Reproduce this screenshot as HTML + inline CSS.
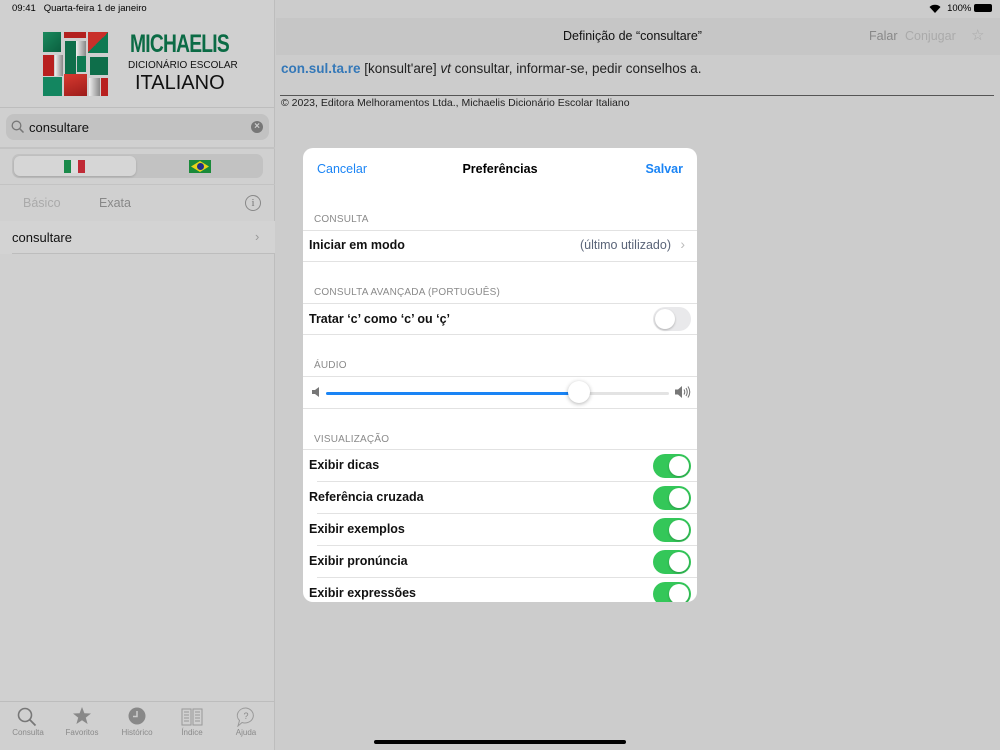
<!DOCTYPE html>
<html><head><meta charset="utf-8"><style>
*{box-sizing:border-box;margin:0;padding:0}
body{width:1000px;height:750px;overflow:hidden;background:#cccccc;font-family:"Liberation Sans",sans-serif;position:relative;color:#000}
.a{position:absolute}
.side{left:0;top:0;width:275px;height:750px;background:#d0d0d0;border-right:1px solid #bdbdbd}
.t{position:absolute}
.sec{position:absolute;left:11px;font-size:10px;color:#8a8a8a;letter-spacing:.2px}
.row{position:absolute;left:6px;font-size:12.5px;font-weight:bold;color:#111}
.line{position:absolute;height:1px;background:#e2e2e2}
.sw{position:absolute;right:6px;width:38px;height:24px;border-radius:12px;background:#34c759}
.sw::after{content:"";position:absolute;right:2px;top:2px;width:20px;height:20px;border-radius:50%;background:#fff;box-shadow:0 1px 2px rgba(0,0,0,.25)}
.sw.off{background:#e9e9eb}
.sw.off::after{left:2px;right:auto}
.tab{position:absolute;top:728px;width:50px;text-align:center;font-size:8px;color:#8a8a8a}
</style></head><body>
<div class="a side"></div>
<div class="t" style="left:12px;top:3px;font-size:9.5px">09:41&nbsp;&nbsp; Quarta-feira 1 de janeiro</div>
<div class="t" style="right:8px;top:3px;font-size:9.5px">100% <span style="display:inline-block;width:18px;height:8px;background:#000;border-radius:2px;vertical-align:-1px"></span></div>
<svg class="a" style="left:929px;top:4px" width="12" height="9" viewBox="0 0 12 9"><path d="M6 9 L0.5 3 A8 8 0 0 1 11.5 3 Z" fill="#000"/></svg>
<!-- logo -->
<div class="a" style="left:42px;top:31px;width:67px;height:66px;background:#cfcfcf">
<div class="a" style="left:1px;top:1px;width:18px;height:20px;background:linear-gradient(135deg,#1a8a5e,#0b5f3f)"></div>
<div class="a" style="left:22px;top:1px;width:22px;height:6px;background:#b3211f"></div>
<div class="a" style="left:46px;top:1px;width:20px;height:21px;background:linear-gradient(135deg,#c9302a 50%,#0e7a52 50%)"></div>
<div class="a" style="left:1px;top:24px;width:11px;height:21px;background:#b8201f"></div>
<div class="a" style="left:13px;top:24px;width:8px;height:21px;background:linear-gradient(90deg,#eee,#888)"></div>
<div class="a" style="left:23px;top:10px;width:11px;height:33px;background:#0e6e4a"></div>
<div class="a" style="left:34px;top:10px;width:10px;height:16px;background:linear-gradient(90deg,#eee,#888)"></div>
<div class="a" style="left:35px;top:25px;width:9px;height:16px;background:#0e7a52"></div>
<div class="a" style="left:48px;top:26px;width:18px;height:18px;background:#0e6e4a"></div>
<div class="a" style="left:1px;top:46px;width:19px;height:19px;background:#138660"></div>
<div class="a" style="left:22px;top:43px;width:23px;height:22px;background:linear-gradient(160deg,#d83a30,#9c1c1a)"></div>
<div class="a" style="left:47px;top:47px;width:11px;height:18px;background:linear-gradient(90deg,#eee,#888)"></div>
<div class="a" style="left:59px;top:47px;width:7px;height:18px;background:#b8201f"></div>
</div>
<div class="t" style="left:130px;top:30px;font-size:25px;font-weight:bold;color:#0b6b45;letter-spacing:-1px;transform:scaleX(.77);transform-origin:left">MICHAELIS</div>
<div class="t" style="left:128px;top:59px;font-size:10.5px;color:#111;transform:scaleX(.95);transform-origin:left">DICIONÁRIO ESCOLAR</div>
<div class="t" style="left:135px;top:72px;font-size:20px;color:#111">ITALIANO</div>
<div class="a" style="left:0;top:107px;width:275px;height:1px;background:#bdbdbd"></div>
<div class="a" style="left:6px;top:114px;width:263px;height:26px;border-radius:8px;background:#c2c2c2"></div>
<svg class="a" style="left:11px;top:120px" width="14" height="14" viewBox="0 0 14 14"><circle cx="5.5" cy="5.5" r="4.3" fill="none" stroke="#777" stroke-width="1.3"/><path d="M8.7 8.7 L12.5 12.5" stroke="#777" stroke-width="1.5"/></svg>
<div class="t" style="left:29px;top:120px;font-size:13px;color:#111">consultare</div>
<div class="a" style="left:251px;top:121px;width:12px;height:12px;border-radius:50%;background:#777;color:#ccc;font-size:10px;line-height:12px;text-align:center;font-weight:bold">×</div>
<div class="a" style="left:0;top:147px;width:275px;height:2px;background:#c3c3c3"></div>
<div class="a" style="left:12px;top:154px;width:251px;height:24px;border-radius:7px;background:#c2c2c2"></div>
<div class="a" style="left:14px;top:156px;width:122px;height:20px;border-radius:6px;background:#d6d6d6;box-shadow:0 1px 2px rgba(0,0,0,.15)"></div>
<div class="a" style="left:64px;top:160px;width:7px;height:13px;background:#1a8a4a"></div><div class="a" style="left:71px;top:160px;width:7px;height:13px;background:#ddd"></div><div class="a" style="left:78px;top:160px;width:7px;height:13px;background:#c02a36"></div>
<div class="a" style="left:189px;top:160px;width:22px;height:13px;background:#1a8a3a"></div>
<div class="a" style="left:191px;top:161px;width:18px;height:11px;background:#e8d21a;clip-path:polygon(50% 0,100% 50%,50% 100%,0 50%)"></div>
<div class="a" style="left:196.5px;top:163px;width:7px;height:7px;border-radius:50%;background:#23308a"></div>
<div class="a" style="left:0;top:184px;width:275px;height:1px;background:#c3c3c3"></div>
<div class="t" style="left:23px;top:196px;font-size:12.5px;color:#aaa">Básico</div>
<div class="t" style="left:99px;top:196px;font-size:12.5px;color:#888">Exata</div>
<div class="a" style="left:245px;top:195px;width:16px;height:16px;border-radius:50%;border:1px solid #888;font-size:11px;color:#777;text-align:center;line-height:14px;font-family:'Liberation Serif',serif">i</div>
<div class="a" style="left:0;top:221px;width:275px;height:33px;background:#d3d3d3"></div>
<div class="t" style="left:12px;top:230px;font-size:13px;color:#111">consultare</div>
<div class="t" style="left:255px;top:229px;font-size:13px;color:#999">›</div>
<div class="a" style="left:12px;top:253px;width:263px;height:1px;background:#bdbdbd"></div>
<!-- tab bar -->
<div class="a" style="left:0;top:701px;width:275px;height:1px;background:#bdbdbd"></div>
<svg class="a" style="left:17px;top:707px" width="20" height="20" viewBox="0 0 20 20"><circle cx="8" cy="8" r="6.5" fill="none" stroke="#777" stroke-width="1.6"/><path d="M12.8 12.8 L18.5 18.5" stroke="#777" stroke-width="1.8"/></svg>
<svg class="a" style="left:72px;top:706px" width="20" height="20" viewBox="0 0 20 20"><path d="M10 1 L12.4 7.3 L19 7.5 L13.8 11.6 L15.6 18 L10 14.3 L4.4 18 L6.2 11.6 L1 7.5 L7.6 7.3 Z" fill="#888"/></svg>
<svg class="a" style="left:127px;top:707px" width="20" height="20" viewBox="0 0 20 20"><circle cx="10" cy="9" r="8.5" fill="#888"/><path d="M10 4 V9.5 H6" stroke="#ccc" stroke-width="1.5" fill="none"/></svg>
<svg class="a" style="left:181px;top:707px" width="22" height="20" viewBox="0 0 22 20"><path d="M1 2 H10 V18 H1 Z M12 2 H21 V18 H12 Z" fill="none" stroke="#999" stroke-width="1"/><path d="M3 5H8M3 8H8M3 11H8M3 14H8M14 5H19M14 8H19M14 11H19M14 14H19" stroke="#999"/></svg>
<svg class="a" style="left:236px;top:707px" width="20" height="20" viewBox="0 0 20 20"><path d="M10 1 A8.5 7.5 0 1 1 6 15.5 L2 19 L3.5 13.5 A8.5 7.5 0 0 1 10 1 Z" fill="none" stroke="#999"/><text x="10" y="12" font-size="9" text-anchor="middle" fill="#888" font-family="Liberation Sans">?</text></svg>
<div class="tab" style="left:3px">Consulta</div>
<div class="tab" style="left:57px">Favoritos</div>
<div class="tab" style="left:112px">Histórico</div>
<div class="tab" style="left:167px">Índice</div>
<div class="tab" style="left:221px">Ajuda</div>
<!-- right -->
<div class="a" style="left:276px;top:18px;width:724px;height:37px;background:#c6c6c6"></div>
<div class="t" style="left:563px;top:29px;font-size:12.5px;color:#111">Definição de “consultare”</div>
<div class="t" style="left:869px;top:29px;font-size:12.5px;color:#888">Falar</div>
<div class="t" style="left:905px;top:29px;font-size:12.5px;color:#aaa">Conjugar</div>
<div class="t" style="left:971px;top:26px;font-size:15px;color:#aaa">☆</div>
<div class="t" style="left:281px;top:61px;font-size:13.5px;color:#222"><b style="color:#3478b8">con.sul.ta.re</b> [konsult'are] <i>vt</i> consultar, informar-se, pedir conselhos a.</div>
<div class="a" style="left:280px;top:95px;width:714px;height:1px;background:#555"></div>
<div class="t" style="left:281px;top:97px;font-size:10.5px;color:#222">© 2023, Editora Melhoramentos Ltda., Michaelis Dicionário Escolar Italiano</div>
<div class="a" style="left:374px;top:740px;width:252px;height:4px;border-radius:2px;background:#000"></div>
<!-- modal -->
<div class="a" style="left:303px;top:148px;width:394px;height:454px;background:#fff;border-radius:10px;overflow:hidden">
<div class="t" style="left:14px;top:14px;font-size:12.5px;color:#1a84f5">Cancelar</div>
<div class="t" style="left:0;width:394px;text-align:center;top:14px;font-size:12.5px;font-weight:bold">Preferências</div>
<div class="t" style="right:14px;top:14px;font-size:12.5px;font-weight:bold;color:#1a84f5">Salvar</div>
<div class="sec" style="top:66px">CONSULTA</div>
<div class="line" style="left:0;width:394px;top:82px"></div>
<div class="row" style="top:90px">Iniciar em modo</div>
<div class="t" style="right:26px;top:90px;font-size:12.5px;color:#5a6478">(último utilizado)</div>
<div class="t" style="right:12px;top:88px;font-size:14px;color:#bbb">›</div>
<div class="line" style="left:0;width:394px;top:113px"></div>
<div class="sec" style="top:139px">CONSULTA AVANÇADA (PORTUGUÊS)</div>
<div class="line" style="left:0;width:394px;top:155px"></div>
<div class="row" style="top:164px">Tratar ‘c’ como ‘c’ ou ‘ç’</div>
<div class="sw off" style="top:159px"></div>
<div class="line" style="left:0;width:394px;top:186px"></div>
<div class="sec" style="top:212px">ÁUDIO</div>
<div class="line" style="left:0;width:394px;top:228px"></div>
<svg class="a" style="left:9px;top:239px" width="8" height="10" viewBox="0 0 8 10"><path d="M0 3H3L7 0V10L3 7H0Z" fill="#777"/></svg>
<div class="a" style="left:23px;top:244px;width:253px;height:3px;border-radius:2px;background:#1a84f5"></div>
<div class="a" style="left:276px;top:244px;width:90px;height:3px;border-radius:2px;background:#e3e3e3"></div>
<div class="a" style="left:265px;top:233px;width:22px;height:22px;border-radius:50%;background:#fff;box-shadow:0 1px 4px rgba(0,0,0,.3)"></div>
<svg class="a" style="left:372px;top:237px" width="17" height="14" viewBox="0 0 17 14"><path d="M0 4.5H3L7 1V13L3 9.5H0Z" fill="#777"/><path d="M9 4.5Q10.5 7 9 9.5M11 3Q13.5 7 11 11M13 1.5Q16.5 7 13 12.5" stroke="#777" fill="none" stroke-width="1.1"/></svg>
<div class="line" style="left:0;width:394px;top:260px"></div>
<div class="sec" style="top:286px">VISUALIZAÇÃO</div>
<div class="line" style="left:0;width:394px;top:301px"></div>
<div class="row" style="top:310px">Exibir dicas</div><div class="sw" style="top:306px"></div>
<div class="line" style="left:14px;width:380px;top:333px"></div>
<div class="row" style="top:342px">Referência cruzada</div><div class="sw" style="top:338px"></div>
<div class="line" style="left:14px;width:380px;top:365px"></div>
<div class="row" style="top:374px">Exibir exemplos</div><div class="sw" style="top:370px"></div>
<div class="line" style="left:14px;width:380px;top:397px"></div>
<div class="row" style="top:406px">Exibir pronúncia</div><div class="sw" style="top:402px"></div>
<div class="line" style="left:14px;width:380px;top:429px"></div>
<div class="row" style="top:438px">Exibir expressões</div><div class="sw" style="top:434px"></div>
</div>
</body></html>
